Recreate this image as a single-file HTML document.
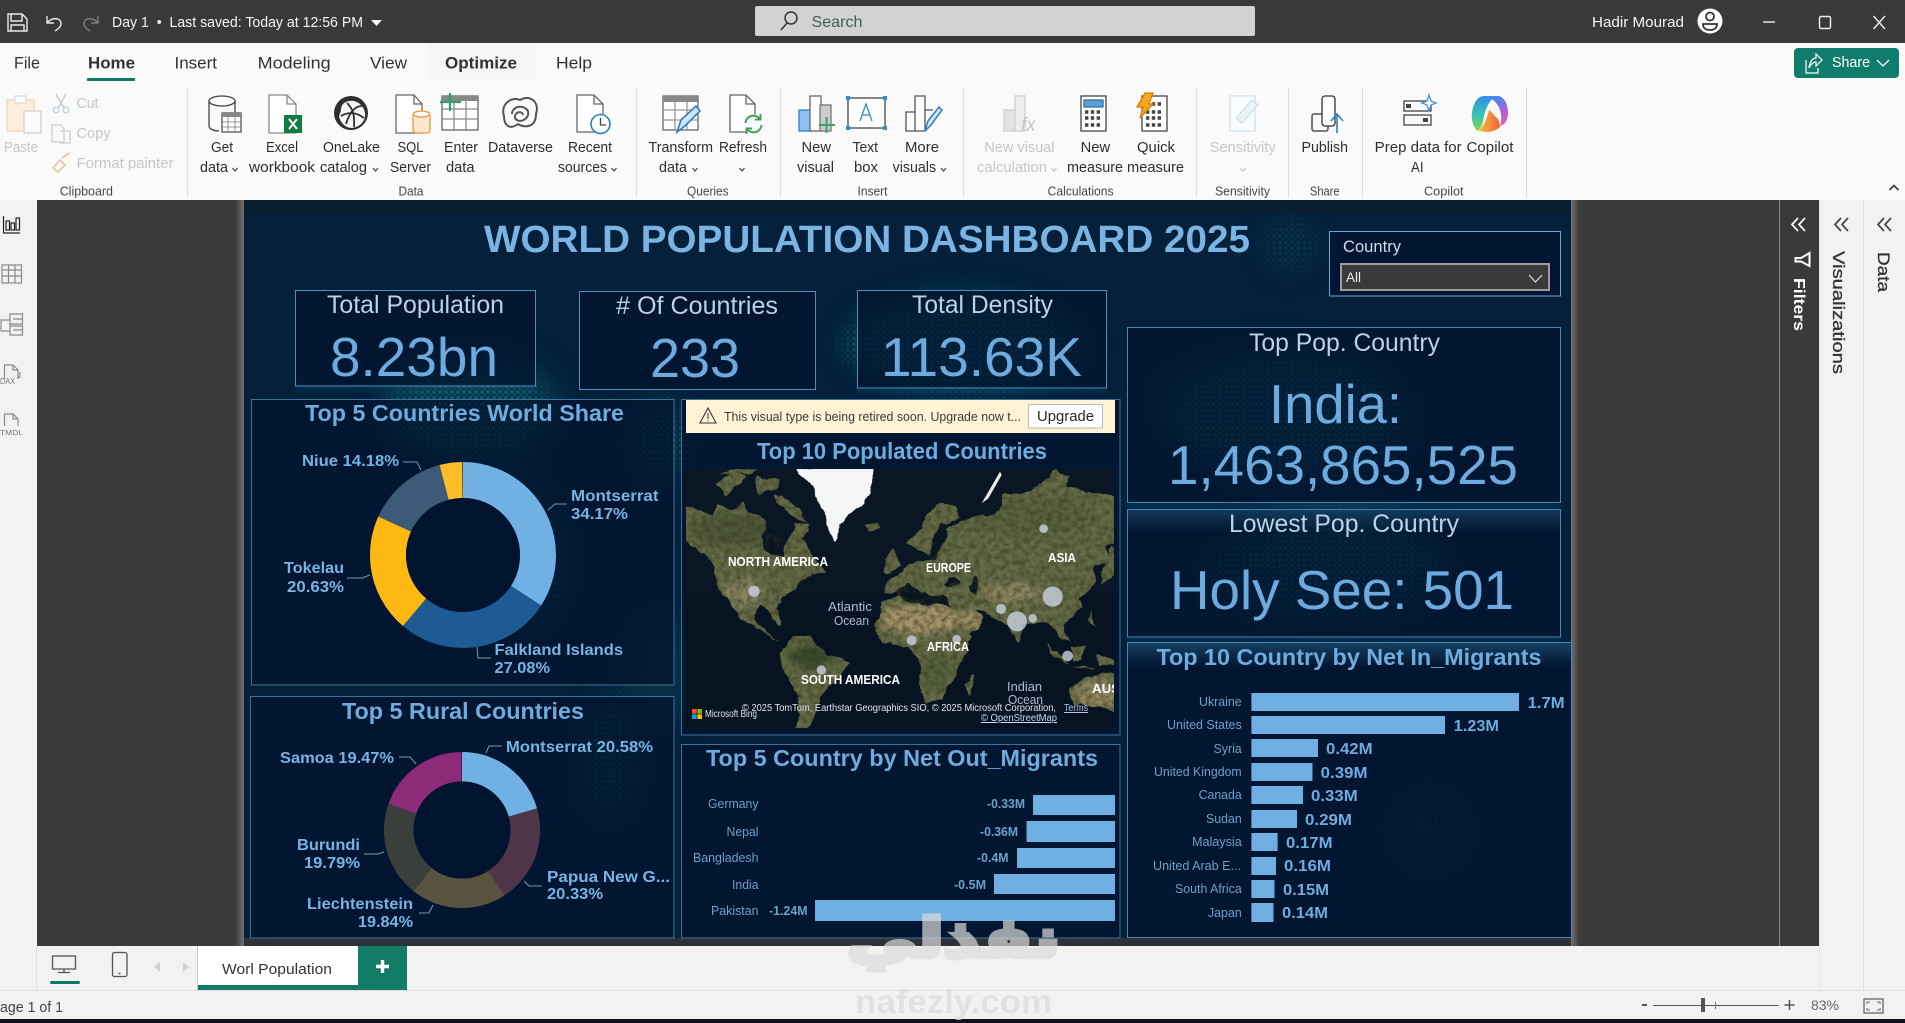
<!DOCTYPE html>
<html lang="en"><head><meta charset="utf-8"><title>Power BI - World Population Dashboard</title>
<style>
html,body{margin:0;padding:0;background:#3b3a39;overflow:hidden}
svg{display:block}
text{font-family:"Liberation Sans","DejaVu Sans",sans-serif;white-space:pre}
</style></head><body>
<svg xmlns="http://www.w3.org/2000/svg" width="1905" height="1023" viewBox="0 0 1905 1023">
<defs>
<pattern id="dots" width="6" height="6" patternUnits="userSpaceOnUse"><circle cx="2" cy="2" r="1.8" fill="#1f9a9c"/><circle cx="5" cy="5" r="1.4" fill="#157f88"/></pattern>
<filter id="b1" x="0" y="0" width="100%" height="100%"><feGaussianBlur stdDeviation=".8"/></filter>
<filter id="b2" x="-30%" y="-30%" width="160%" height="160%"><feGaussianBlur stdDeviation="2"/></filter>
<filter id="b12" x="-40%" y="-40%" width="180%" height="180%"><feGaussianBlur stdDeviation="14"/></filter>
<filter id="b6" x="-40%" y="-40%" width="180%" height="180%"><feGaussianBlur stdDeviation="12"/></filter>
<filter id="coast" x="-10%" y="-10%" width="120%" height="120%" color-interpolation-filters="sRGB">
<feTurbulence type="fractalNoise" baseFrequency=".02" numOctaves="4" seed="3" result="d"/>
<feDisplacementMap in="SourceGraphic" in2="d" scale="22" xChannelSelector="R" yChannelSelector="G"/></filter>
<filter id="grain" x="-5%" y="-5%" width="110%" height="110%" color-interpolation-filters="sRGB">
<feTurbulence type="fractalNoise" baseFrequency=".02" numOctaves="4" seed="3" result="d"/>
<feDisplacementMap in="SourceGraphic" in2="d" scale="30" xChannelSelector="R" yChannelSelector="G" result="land"/>
<feTurbulence type="fractalNoise" baseFrequency=".06" numOctaves="3" seed="5" result="n"/>
<feColorMatrix in="n" type="matrix" values="0 0 0 0 .2  0 0 0 0 .22  0 0 0 0 .12  1.300 0 0 0 -.45" result="dk"/>
<feComposite in="dk" in2="land" operator="in" result="c"/>
<feMerge><feMergeNode in="land"/><feMergeNode in="c"/></feMerge></filter>
<linearGradient id="sl" x1="0" x2="1"><stop offset="0" stop-color="#3b3a39"/><stop offset="1" stop-color="#747474"/></linearGradient>
<linearGradient id="sr" x1="0" x2="1"><stop offset="0" stop-color="#747474"/><stop offset="1" stop-color="#3b3a39"/></linearGradient>
<linearGradient id="band" x1="0" x2="0" y1="0" y2="1"><stop offset="0" stop-color="#2a6a94" stop-opacity=".7"/><stop offset="1" stop-color="#2a6a94" stop-opacity="0"/></linearGradient>
<linearGradient id="copL" x1="0" x2="0" y1="0" y2="1"><stop offset="0" stop-color="#2f8fe8"/><stop offset=".55" stop-color="#39c5b0"/><stop offset="1" stop-color="#8fd14f"/></linearGradient>
<linearGradient id="copR" x1="0" x2="0" y1="0" y2="1"><stop offset="0" stop-color="#3a8de8"/><stop offset=".5" stop-color="#b15fe0"/><stop offset="1" stop-color="#ef5fa7"/></linearGradient>
<linearGradient id="copB" x1="0" x2="1" y1="0" y2="0"><stop offset="0" stop-color="#f7c23c"/><stop offset="1" stop-color="#f0603c"/></linearGradient>
<clipPath id="mapclip"><rect x="686" y="469" width="428" height="259"/></clipPath>
<clipPath id="landclip"><path d="M-10 145L70 150 100 165 115 135 150 150 180 130 210 160 240 170 260 190 245 225 260 270 310 285 320 245 350 190 385 185 380 215 360 240 395 285 425 320 440 340 395 345 360 365 345 385 305 410 290 450 305 490 295 500 270 450 240 440 225 450 235 490 270 525 300 545 280 535 240 510 185 470 140 420 115 380 105 330 70 280 -10 235Z M615 395L625 355 660 345 690 310 745 300 790 260 800 205 860 180 920 170 960 150 975 105 1050 95 1130 35 1165 50 1160 80 1225 95 1330 115 1330 240 1275 260 1290 310 1250 320 1240 370 1195 420 1200 445 1150 490 1170 550 1140 530 1110 490 1060 490 1030 490 1015 550 985 490 940 470 900 450 880 450 920 480 890 510 850 530 810 440 800 425 740 425 720 395 690 370 650 400Z M585 490L610 430 650 410 720 430 810 440 840 510 880 530 850 590 835 650 805 680 775 730 740 735 725 670 715 600 695 560 650 555 610 550Z M300 590L340 530 390 535 440 580 505 605 480 650 435 690 410 745 385 815 345 815 360 720 335 665 305 625Z M1165 690L1220 650 1330 640 1330 770 1260 740 1180 730Z"/></clipPath>
<mask id="wm" maskUnits="userSpaceOnUse" x="244" y="200" width="1327" height="746">
<g filter="url(#b12)" fill="#fff">
<ellipse cx="470" cy="415" rx="85" ry="42"/><ellipse cx="520" cy="560" rx="50" ry="70"/><ellipse cx="610" cy="760" rx="28" ry="60"/><ellipse cx="965" cy="345" rx="120" ry="45"/><ellipse cx="1290" cy="420" rx="120" ry="65"/><ellipse cx="1330" cy="570" rx="120" ry="50"/><ellipse cx="1430" cy="830" rx="40" ry="40" fill="#888"/><ellipse cx="660" cy="440" rx="25" ry="40"/><ellipse cx="1290" cy="245" rx="26" ry="26" fill="#777"/>
</g></mask>
</defs>

<!-- base -->
<rect width="1905" height="1023" fill="#f3f2f1"/>
<rect x="37" y="200" width="1782" height="746" fill="#3b3a39"/>
<rect x="1779" y="200" width="1" height="746" fill="#8a8a8a"/>
<rect x="1863" y="200" width="1" height="790" fill="#e1dfdd"/>
<rect x="1819" y="200" width="1" height="790" fill="#e8e6e4"/>

<!-- title bar -->
<rect width="1905" height="43" fill="#3a3938"/>
<g fill="none" stroke="#e8e8e8" stroke-width="1.400">
<path d="M8 14H22L27 19V31H8ZM11 14V21H22V14M11 31V25H24V31"/>
<path d="M47 16V23H54M47 23C52 17 61 17 61 24C61 27 58 29 55 31"/>
<path d="M98 16V23H91M98 23C93 17 84 17 84 24C84 27 87 29 90 31" stroke="#7d7d7d"/>
</g>
<text x="112" y="27" font-size="14.500" fill="#f4f4f4" textLength="251" lengthAdjust="spacingAndGlyphs">Day 1  •  Last saved: Today at 12:56 PM</text>
<path d="M371 20H382L376.500 26Z" fill="#f4f4f4"/>
<rect x="755" y="6" width="500" height="30" rx="2" fill="#d2d2d2"/>
<g fill="none" stroke="#333" stroke-width="1.500"><circle cx="791" cy="18" r="6"/><path d="M787 23L781 30"/></g>
<text x="811.500" y="27" font-size="16" fill="#3f5f5a" textLength="51" lengthAdjust="spacingAndGlyphs">Search</text>
<text x="1592" y="27" font-size="14.500" fill="#f6f6f6" textLength="92" lengthAdjust="spacingAndGlyphs">Hadir Mourad</text>
<circle cx="1710" cy="21" r="12.500" fill="#fff"/>
<circle cx="1710" cy="16.500" r="4" fill="none" stroke="#333" stroke-width="1.800"/>
<path d="M1703 24H1717C1717 29 1713 30 1710 30C1707 30 1703 29 1703 24Z" fill="none" stroke="#333" stroke-width="1.800"/>
<g fill="none" stroke="#f0f0f0" stroke-width="1.400">
<path d="M1763 22H1775"/><rect x="1819.500" y="16.500" width="11" height="12" rx="1.500"/><path d="M1873.500 16L1885 29M1885 16L1873.500 29"/>
</g>

<!-- ribbon -->
<rect y="43" width="1905" height="157" fill="#fbfafa"/>
<rect x="428" y="43" width="108" height="37" fill="#f5f5f5"/>
<g font-size="17" fill="#323130" transform="translate(0 .5)">
<text x="14" y="68" textLength="26" lengthAdjust="spacingAndGlyphs">File</text>
<text x="88" y="68" textLength="47" lengthAdjust="spacingAndGlyphs" font-weight="bold">Home</text>
<text x="174.500" y="68" textLength="42.500" lengthAdjust="spacingAndGlyphs">Insert</text>
<text x="257.600" y="68" textLength="73" lengthAdjust="spacingAndGlyphs">Modeling</text>
<text x="370" y="68" textLength="37" lengthAdjust="spacingAndGlyphs">View</text>
<text x="445" y="68" textLength="72" lengthAdjust="spacingAndGlyphs" font-weight="bold">Optimize</text>
<text x="556" y="68" textLength="36" lengthAdjust="spacingAndGlyphs">Help</text>
</g>
<rect x="87" y="78" width="48" height="3" fill="#117865"/>
<rect x="1794" y="48" width="105" height="30" rx="4" fill="#107c6c"/>
<path d="M1806 60V73H1818V68M1809 68C1810 61 1813 58 1816 58V54L1822 60L1816 66V62C1813 62 1811 64 1809 68Z" fill="none" stroke="#fff" stroke-width="1.200"/>
<text x="1832" y="67" font-size="14.500" fill="#fff" textLength="38" lengthAdjust="spacingAndGlyphs">Share</text>
<path d="M1877 60L1883 66L1889 60" fill="none" stroke="#fff" stroke-width="1.300"/>
<g fill="#dcdcdc"><rect x="187" y="88" width="1" height="110"/><rect x="636" y="88" width="1" height="110"/><rect x="780" y="88" width="1" height="110"/><rect x="963" y="88" width="1" height="110"/><rect x="1196" y="88" width="1" height="110"/><rect x="1288" y="88" width="1" height="110"/><rect x="1362" y="88" width="1" height="110"/><rect x="1526" y="88" width="1" height="110"/></g>

<!-- ribbon labels gray -->
<g font-size="14.500" fill="#c6c6c6" transform="translate(0 1)">
<text x="4" y="151" textLength="34" lengthAdjust="spacingAndGlyphs">Paste</text>
<text x="76.500" y="107" textLength="22" lengthAdjust="spacingAndGlyphs">Cut</text>
<text x="76.500" y="137" textLength="34" lengthAdjust="spacingAndGlyphs">Copy</text>
<text x="76.500" y="167" textLength="97" lengthAdjust="spacingAndGlyphs">Format painter</text>
<text x="984.400" y="151" textLength="70" lengthAdjust="spacingAndGlyphs">New visual</text>
<text x="977" y="171" textLength="70" lengthAdjust="spacingAndGlyphs">calculation</text>
<text x="1209.700" y="151" textLength="66" lengthAdjust="spacingAndGlyphs">Sensitivity</text>
</g>
<g font-size="14.500" fill="#2f2e2d" transform="translate(0 1)">
<text x="211" y="151" textLength="22" lengthAdjust="spacingAndGlyphs">Get</text>
<text x="200" y="171" textLength="28" lengthAdjust="spacingAndGlyphs">data</text>
<text x="266" y="151" textLength="32" lengthAdjust="spacingAndGlyphs">Excel</text>
<text x="249" y="171" textLength="66" lengthAdjust="spacingAndGlyphs">workbook</text>
<text x="323" y="151" textLength="57" lengthAdjust="spacingAndGlyphs">OneLake</text>
<text x="320" y="171" textLength="47" lengthAdjust="spacingAndGlyphs">catalog</text>
<text x="397.500" y="151" textLength="26" lengthAdjust="spacingAndGlyphs">SQL</text>
<text x="390" y="171" textLength="41" lengthAdjust="spacingAndGlyphs">Server</text>
<text x="444" y="151" textLength="34" lengthAdjust="spacingAndGlyphs">Enter</text>
<text x="446" y="171" textLength="28.500" lengthAdjust="spacingAndGlyphs">data</text>
<text x="488" y="151" textLength="65" lengthAdjust="spacingAndGlyphs">Dataverse</text>
<text x="568" y="151" textLength="44" lengthAdjust="spacingAndGlyphs">Recent</text>
<text x="558" y="171" textLength="49" lengthAdjust="spacingAndGlyphs">sources</text>
<text x="648.500" y="151" textLength="64.500" lengthAdjust="spacingAndGlyphs">Transform</text>
<text x="659" y="171" textLength="28" lengthAdjust="spacingAndGlyphs">data</text>
<text x="719" y="151" textLength="48" lengthAdjust="spacingAndGlyphs">Refresh</text>
<text x="801.500" y="151" textLength="29.500" lengthAdjust="spacingAndGlyphs">New</text>
<text x="797" y="171" textLength="37" lengthAdjust="spacingAndGlyphs">visual</text>
<text x="852.500" y="151" textLength="25.500" lengthAdjust="spacingAndGlyphs">Text</text>
<text x="854" y="171" textLength="24" lengthAdjust="spacingAndGlyphs">box</text>
<text x="905" y="151" textLength="34" lengthAdjust="spacingAndGlyphs">More</text>
<text x="892.600" y="171" textLength="43.500" lengthAdjust="spacingAndGlyphs">visuals</text>
<text x="1080.600" y="151" textLength="29.500" lengthAdjust="spacingAndGlyphs">New</text>
<text x="1067" y="171" textLength="56" lengthAdjust="spacingAndGlyphs">measure</text>
<text x="1137" y="151" textLength="38" lengthAdjust="spacingAndGlyphs">Quick</text>
<text x="1127" y="171" textLength="57" lengthAdjust="spacingAndGlyphs">measure</text>
<text x="1301.500" y="151" textLength="46.500" lengthAdjust="spacingAndGlyphs">Publish</text>
<text x="1374.700" y="151" textLength="87" lengthAdjust="spacingAndGlyphs">Prep data for</text>
<text x="1411" y="171" textLength="12.500" lengthAdjust="spacingAndGlyphs">AI</text>
<text x="1466.500" y="151" textLength="47" lengthAdjust="spacingAndGlyphs">Copilot</text>
</g>
<g font-size="12.500" fill="#484644" transform="translate(0 .5)">
<text x="59.700" y="195" textLength="53.300" lengthAdjust="spacingAndGlyphs">Clipboard</text>
<text x="398.500" y="195" textLength="25" lengthAdjust="spacingAndGlyphs">Data</text>
<text x="687" y="195" textLength="41.600" lengthAdjust="spacingAndGlyphs">Queries</text>
<text x="857.500" y="195" textLength="30" lengthAdjust="spacingAndGlyphs">Insert</text>
<text x="1047.600" y="195" textLength="66" lengthAdjust="spacingAndGlyphs">Calculations</text>
<text x="1215" y="195" textLength="55" lengthAdjust="spacingAndGlyphs">Sensitivity</text>
<text x="1310" y="195" textLength="29.500" lengthAdjust="spacingAndGlyphs">Share</text>
<text x="1424" y="195" textLength="39.600" lengthAdjust="spacingAndGlyphs">Copilot</text>
</g>
<g fill="none" stroke="#444" stroke-width="1.200" transform="translate(0 1)">
<path d="M232.500 167L235 170L237.500 167M373 167L375.500 170L378 167M611.500 167L614 170L616.500 167M692.500 167L695 170L697.500 167M739.500 167L742 170L744.500 167M941 167L943.500 170L946 167"/>
<path d="M1051.500 167L1054 170L1056.500 167M1240 167L1242.700 170L1245.500 167" stroke="#c6c6c6"/>
</g>
<path d="M1889.500 190L1894 185.500L1898.500 190" fill="none" stroke="#333" stroke-width="1.600"/>

<!-- ribbon icons -->
<g fill="none" stroke-width="1.300">
<!-- paste -->
<rect x="7" y="100" width="27" height="31" fill="#fbeedd" stroke="#edd7ba"/><rect x="15" y="96" width="11" height="7" fill="#fbfafa" stroke="#ddd"/><rect x="24" y="111" width="17" height="22" fill="#fbfafa" stroke="#d2d2d2"/>
<path d="M56 94L64 108M66 94L58 108" stroke="#c7c7c7"/><circle cx="56" cy="110" r="2.800" stroke="#b9d4e8"/><circle cx="66" cy="110" r="2.800" stroke="#b9d4e8"/>
<path d="M52 125H61L64 129V142H52ZM60 131H70V143H60" stroke="#cfcfcf"/>
<path d="M53 168L60 160L65 165L58 172ZM62 158L69 153" stroke="#e6cdaa" stroke-width="2"/>
<!-- get data -->
<ellipse cx="222" cy="101" rx="13" ry="5" stroke="#444" fill="#fff"/><path d="M209 101V126C209 129 214 131 219 131" stroke="#444"/><path d="M235 101V112" stroke="#444"/>
<rect x="222" y="113" width="19" height="19" fill="#fff" stroke="#555"/><rect x="222" y="113" width="19" height="4" fill="#888"/><path d="M222 122H241M222 127H241M228 117V132M235 117V132" stroke="#777" stroke-width=".8"/>
<!-- excel -->
<path d="M269 95H287L296 104V133H269ZM287 95V104H296" stroke="#8a8a8a" fill="#fff"/><rect x="284" y="115" width="18" height="18" fill="#107c41"/>
<path d="M289 119L297 129M297 119L289 129" stroke="#fff" stroke-width="2"/>
<!-- onelake -->
<circle cx="351" cy="113" r="17" fill="#2f2f2f"/>
<path d="M343 104C351 97 363 102 365 113C366 121 360 127 352 128C345 128 340 122 339 116C342 110 340 108 343 104Z" fill="#f5f5f5"/>
<path d="M347 103C352 108 355 113 354 127M341 116C348 112 356 112 364 118M362 106C356 106 350 111 346 124" stroke="#2f2f2f" stroke-width="1.800"/>
<!-- sql -->
<path d="M396 95H414L422 104V133H396ZM414 95V104H422" stroke="#666" fill="#fff"/><rect x="413" y="113" width="17" height="20" rx="3" fill="#fbe7cf" stroke="#e79a3a"/><ellipse cx="421.500" cy="114" rx="8" ry="3" fill="#fff" stroke="#e79a3a"/>
<!-- enter data -->
<rect x="442" y="96" width="36" height="34" stroke="#666" fill="#fff"/><rect x="442" y="96" width="36" height="5" fill="#888"/><path d="M442 109H478M442 119H478M454 101V130M466 101V130" stroke="#888"/><path d="M450 93V111M440 102H461" stroke="#2f9e6e" stroke-width="2.200"/>
<!-- dataverse -->
<path d="M504 116C500 104 512 96 520 100C530 94 540 102 536 114C536 128 524 128 518 124C510 130 504 126 504 116Z" stroke="#555" stroke-width="2"/><path d="M512 114C512 106 524 104 528 111C530 120 518 124 515 118C514 112 522 110 523 115" stroke="#555" stroke-width="2"/>
<!-- recent -->
<path d="M577 95H594L603 104V132H577ZM594 95V104H603" stroke="#666" fill="#fff"/><circle cx="600.500" cy="124" r="9.500" stroke="#2f7fbe" fill="#fff" stroke-width="1.600"/><path d="M600.500 118V125H606" stroke="#444"/>
<!-- transform -->
<rect x="663" y="96" width="35" height="34" stroke="#666" fill="#fff"/><rect x="663" y="96" width="35" height="6" fill="#888"/><path d="M663 110H698M663 120H698M675 102V130M687 102V130" stroke="#999"/><path d="M677 132L681 120L696 106L700 111L685 126Z" fill="#cfe4f5" stroke="#2f7fbe" stroke-width="1.600"/>
<!-- refresh -->
<path d="M730 95H746L755 104V132H730ZM746 95V104H755" stroke="#666" fill="#fff"/><circle cx="753.500" cy="124" r="10" fill="#fbfafa"/><path d="M745.500 123A8 8 0 0 1 760 119M761.500 125A8 8 0 0 1 747 129M760.500 114V119.500H755M746.500 134V128.500H752" stroke="#3e9e5b" stroke-width="1.900"/>
<!-- new visual -->
<rect x="799" y="110" width="13" height="21" fill="#8cc0ee" stroke="#2f7fbe"/><rect x="810" y="96" width="11" height="35" stroke="#666" fill="#fff"/><rect x="820" y="105" width="11" height="26" fill="#ccc" stroke="#777"/><path d="M826.500 117V133M819 125H835" stroke="#3f9d6e" stroke-width="2"/>
<!-- text box -->
<rect x="848" y="98" width="37" height="30" stroke="#444" fill="#fff"/><g fill="#2f8fc6"><rect x="846" y="96" width="4" height="4"/><rect x="883" y="96" width="4" height="4"/><rect x="846" y="126" width="4" height="4"/><rect x="883" y="126" width="4" height="4"/></g><path d="M860 121L866 104L872 121M862 115H870" stroke="#2f8fc6"/>
<!-- more visuals -->
<path d="M906 112H915V131H906ZM915 96H925V131H915ZM925 110H933" stroke="#555" fill="#fff"/><path d="M925 131L928 121L939 107L942 110L931 125Z" fill="#d5e7f5" stroke="#2f7fbe" stroke-width="1.500"/>
<!-- visual calc -->
<rect x="1004" y="110" width="12" height="21" fill="#e3e3e3" stroke="#d0d0d0"/><rect x="1015" y="96" width="10" height="35" fill="#eee" stroke="#d0d0d0"/>
<text x="1021" y="131" font-family="Liberation Serif" font-style="italic" font-size="19" fill="#c6c6c6" stroke="none">fx</text>
<!-- new measure -->
<rect x="1081" y="96" width="25" height="35" stroke="#444" fill="#fff"/><rect x="1084" y="100" width="19" height="7" fill="#5a9fd6" stroke="#2f6f9f"/>
<path d="M1085 112H1102M1085 118H1102M1085 125H1102" stroke="#444" stroke-width="3.400" stroke-dasharray="3.400 2.400"/>
<!-- quick measure -->
<rect x="1142" y="96" width="25" height="35" stroke="#444" fill="#fff"/><path d="M1146 104H1163M1146 112H1163M1146 118H1163M1146 125H1163" stroke="#444" stroke-width="3.400" stroke-dasharray="3.400 2.400"/>
<path d="M1145 93H1153L1149 104H1153L1140 118L1143 107H1137Z" fill="#f3a81e" stroke="#d87e0c"/>
<!-- sensitivity -->
<path d="M1230 96H1255V131H1230Z" stroke="#cfe1ee" fill="#fafdff"/><path d="M1236 118L1252 100L1258 105L1242 123Z" stroke="#cfdfe9" fill="#eaf3f9"/>
<!-- publish -->
<rect x="1312" y="114" width="16" height="17" rx="2" stroke="#333"/><rect x="1322" y="96" width="13" height="30" rx="3" stroke="#333" fill="#fff"/><path d="M1337 133V114M1331 121L1337 114L1343 121" stroke="#2f7fbe" stroke-width="1.600"/>
<!-- prep data -->
<rect x="1404" y="101" width="27" height="10" stroke="#444"/><rect x="1406" y="104" width="5" height="4" fill="#444"/><rect x="1404" y="115" width="27" height="10" stroke="#444"/><rect x="1423" y="118" width="5" height="4" fill="#444"/><path d="M1429 95L1431 101L1436 103L1431 105L1429 111L1427 105L1422 103L1427 101Z" stroke="#3a96cf" fill="#fff"/>
</g>
<!-- copilot -->
<path d="M1484 96H1497C1489 100 1486 108 1484 116C1483 122 1482 128 1477 131C1473 126 1471 120 1472 113C1473 103 1478 96 1484 96Z" fill="url(#copL)"/>
<path d="M1485 96H1499C1505 98 1508 105 1508 113C1508 120 1505 125 1500 126C1503 118 1501 106 1493 100Z" fill="url(#copR)"/>
<path d="M1478 131C1484 126 1487 118 1489 110L1495 114C1499 120 1500 124 1500 127C1497 130 1492 132 1486 132Z" fill="url(#copB)"/>
<path d="M1489 109C1490 104 1491 102 1493 101C1497 106 1499 112 1498 119C1495 117 1492 113 1489 109Z" fill="#f6f6f6" opacity=".85"/>

<!-- left sidebar icons -->
<g fill="none" stroke="#8a8a8a" stroke-width="1.200">
<path d="M3.500 216V233H20" stroke="#222"/><rect x="6" y="221" width="3.500" height="9" stroke="#222"/><rect x="11" y="223" width="3.500" height="7" stroke="#222"/><rect x="16" y="218" width="3.500" height="12" stroke="#222"/>
<rect x="2" y="265" width="19.500" height="18"/><path d="M2 270H21.500M2 276H21.500M8.500 265V283M15 265V283"/>
<path d="M1 320H10V331H1ZM10 314H22.500V324H10ZM10 326H22.500V335H10ZM13 319H22M13 330H22"/>
<path d="M4.500 379V365H13L18 370V379M13 365V370H18M18 378C20 378 20 376 20 372"/>
<text x="0" y="384" font-size="8" fill="#777" stroke="none" textLength="15" lengthAdjust="spacingAndGlyphs">DAX</text>
<path d="M4.500 426V414H13L18 419V426M13 414V419H18"/>
<text x="0" y="435" font-size="7.500" fill="#777" stroke="none" textLength="23" lengthAdjust="spacingAndGlyphs">TMDL</text>
</g>

<!-- REPORT PAGE -->
<rect x="236" y="200" width="8" height="746" fill="url(#sl)"/>
<rect x="1571" y="200" width="8" height="746" fill="url(#sr)"/>
<rect x="244" y="200" width="1327" height="746" fill="#04203b"/>
<rect x="244" y="200" width="1327" height="14" fill="#0b1c2e" opacity=".7"/>
<rect x="244" y="938" width="1327" height="8" fill="#2c3238"/>
<!-- background world glow -->
<g filter="url(#b12)" fill="#0e5468" opacity=".28">
<ellipse cx="470" cy="400" rx="90" ry="55"/><ellipse cx="500" cy="510" rx="45" ry="90"/><ellipse cx="960" cy="340" rx="110" ry="50"/><ellipse cx="1270" cy="400" rx="120" ry="55"/><ellipse cx="1350" cy="540" rx="90" ry="40"/><ellipse cx="660" cy="670" rx="40" ry="60"/>
</g>
<g mask="url(#wm)"><rect x="244" y="200" width="1327" height="746" fill="url(#dots)" filter="url(#b1)" opacity=".6"/></g>

<!-- panels -->
<g fill="#01132e" fill-opacity=".74" stroke="#4a86b3" stroke-width="1">
<rect x="1329.500" y="231.500" width="231" height="64.500" stroke="#6aa6d1"/>
<rect x="295.500" y="290.500" width="240" height="95.500" stroke="#4e8fbe"/>
<rect x="579.500" y="291.500" width="236" height="98" stroke="#4e8fbe"/>
<rect x="857.500" y="290.500" width="249" height="97.500" stroke="#4e8fbe"/>
<rect x="1127.500" y="327.500" width="433" height="175"/>
<rect x="1127.500" y="509.500" width="433" height="127.500"/>
<rect x="1127.500" y="642.500" width="444" height="295"/>
<rect x="251.500" y="399.500" width="422.500" height="285.500" stroke="#3f7299"/>
<rect x="250.500" y="696.500" width="423.500" height="241.500" stroke="#3f7299"/>
<rect x="681.500" y="399.500" width="438.500" height="335.500" stroke="#3f7299"/>
<rect x="681.500" y="744.500" width="438.500" height="193.500" stroke="#3f7299"/>
</g>
<rect x="1128" y="510" width="432" height="22" fill="url(#band)" opacity=".6"/>
<rect x="1128" y="643" width="443" height="24" fill="url(#band)" opacity=".7"/>
<g opacity=".2" filter="url(#b2)" fill="#1d6a8d"><rect x="295" y="386" width="240" height="5"/><rect x="857" y="388" width="249" height="5"/><rect x="1127" y="502" width="433" height="7"/><rect x="1127" y="637" width="433" height="5"/></g>

<!-- title & KPI -->
<text x="484" y="252" font-size="38" font-weight="bold" fill="#7ab4e2" textLength="766" lengthAdjust="spacingAndGlyphs">WORLD POPULATION DASHBOARD 2025</text>
<g font-size="25" fill="#bcd2e6">
<text x="327" y="313" textLength="177" lengthAdjust="spacingAndGlyphs">Total Population</text>
<text x="616" y="314" textLength="162" lengthAdjust="spacingAndGlyphs"># Of Countries</text>
<text x="912" y="313" textLength="141" lengthAdjust="spacingAndGlyphs">Total Density</text>
<text x="1249" y="351" textLength="191" lengthAdjust="spacingAndGlyphs">Top Pop. Country</text>
<text x="1229" y="532" textLength="230" lengthAdjust="spacingAndGlyphs">Lowest Pop. Country</text>
</g>
<g font-size="55" fill="#6dabdf">
<text x="330" y="376" textLength="168" lengthAdjust="spacingAndGlyphs">8.23bn</text>
<text x="650" y="377" textLength="90" lengthAdjust="spacingAndGlyphs">233</text>
<text x="881" y="376" textLength="201" lengthAdjust="spacingAndGlyphs">113.63K</text>
<text x="1269" y="423" textLength="133" lengthAdjust="spacingAndGlyphs">India:</text>
<text x="1168" y="484" textLength="350" lengthAdjust="spacingAndGlyphs">1,463,865,525</text>
<text x="1170" y="609" textLength="344" lengthAdjust="spacingAndGlyphs">Holy See: 501</text>
</g>

<!-- slicer -->
<text x="1343" y="252" font-size="16.500" fill="#d0dbe6" textLength="58" lengthAdjust="spacingAndGlyphs">Country</text>
<rect x="1341" y="264" width="208" height="26" fill="#3a3a3a" stroke="#9c9c9c" stroke-width="2"/>
<text x="1346" y="282" font-size="13.500" fill="#eee" textLength="15" lengthAdjust="spacingAndGlyphs">All</text>
<path d="M1529 275L1535.500 282L1542 275" fill="none" stroke="#ddd" stroke-width="1.200"/>

<!-- panel titles -->
<g font-size="23" font-weight="bold" fill="#6fabdc">
<text x="305" y="421" textLength="319" lengthAdjust="spacingAndGlyphs">Top 5 Countries World Share</text>
<text x="342" y="719" textLength="242" lengthAdjust="spacingAndGlyphs">Top 5 Rural Countries</text>
<text x="757" y="459" textLength="290" lengthAdjust="spacingAndGlyphs">Top 10 Populated Countries</text>
<text x="706" y="766" textLength="392" lengthAdjust="spacingAndGlyphs">Top 5 Country by Net Out_Migrants</text>
<text x="1156.500" y="665" textLength="385" lengthAdjust="spacingAndGlyphs">Top 10 Country by Net In_Migrants</text>
</g>

<!-- donut 1 -->
<g fill="none" stroke-width="36" transform="rotate(-90 463 555)">
<circle cx="463" cy="555" r="75" pathLength="100" stroke="#71b0e3" stroke-dasharray="34.17 100"/>
<circle cx="463" cy="555" r="75" pathLength="100" stroke="#1e5a93" stroke-dasharray="27.08 100" stroke-dashoffset="-34.17"/>
<circle cx="463" cy="555" r="75" pathLength="100" stroke="#fdb813" stroke-dasharray="20.63 100" stroke-dashoffset="-61.25"/>
<circle cx="463" cy="555" r="75" pathLength="100" stroke="#3d5b78" stroke-dasharray="14.18 100" stroke-dashoffset="-81.88"/>
<circle cx="463" cy="555" r="75" pathLength="100" stroke="#fdbd27" stroke-dasharray="3.94 100" stroke-dashoffset="-96.06"/>
</g>
<circle cx="463" cy="555" r="57" fill="#01142f"/>
<!-- donut 2 -->
<g fill="none" stroke-width="29.500" transform="rotate(-90 462 830)">
<circle cx="462" cy="830" r="63.300" pathLength="100" stroke="#71b0e3" stroke-dasharray="20.58 100"/>
<circle cx="462" cy="830" r="63.300" pathLength="100" stroke="#4f3549" stroke-dasharray="20.33 100" stroke-dashoffset="-20.58"/>
<circle cx="462" cy="830" r="63.300" pathLength="100" stroke="#57533f" stroke-dasharray="19.84 100" stroke-dashoffset="-40.91"/>
<circle cx="462" cy="830" r="63.300" pathLength="100" stroke="#3b3f3c" stroke-dasharray="19.79 100" stroke-dashoffset="-60.75"/>
<circle cx="462" cy="830" r="63.300" pathLength="100" stroke="#8d2b78" stroke-dasharray="19.46 100" stroke-dashoffset="-80.54"/>
</g>
<circle cx="462" cy="830" r="48.500" fill="#01142f"/>
<!-- leaders -->
<g fill="none" stroke="#7d96ad" stroke-width="1">
<path d="M403 462H417L421 470M548 510L555 504H567M347 578H362L370 575M477 647L478 658H491"/>
<path d="M486 753L489 746H502M399 757H410L416 764M364 854H378L384 852M524 881L529 886H542M419 913H429L433 905"/>
</g>
<!-- donut labels -->
<g font-size="16" font-weight="bold" fill="#78b3e4">
<text x="302" y="466" textLength="97" lengthAdjust="spacingAndGlyphs">Niue 14.18%</text>
<text x="571" y="501" textLength="87.500" lengthAdjust="spacingAndGlyphs">Montserrat</text>
<text x="571" y="519" textLength="57" lengthAdjust="spacingAndGlyphs">34.17%</text>
<text x="284" y="573" textLength="60" lengthAdjust="spacingAndGlyphs">Tokelau</text>
<text x="287" y="592" textLength="57" lengthAdjust="spacingAndGlyphs">20.63%</text>
<text x="494.500" y="655" textLength="128.500" lengthAdjust="spacingAndGlyphs">Falkland Islands</text>
<text x="494.500" y="673" textLength="55.500" lengthAdjust="spacingAndGlyphs">27.08%</text>
<text x="506" y="752" textLength="147" lengthAdjust="spacingAndGlyphs">Montserrat 20.58%</text>
<text x="280" y="763" textLength="114" lengthAdjust="spacingAndGlyphs">Samoa 19.47%</text>
<text x="297" y="850" textLength="63" lengthAdjust="spacingAndGlyphs">Burundi</text>
<text x="304" y="868" textLength="56" lengthAdjust="spacingAndGlyphs">19.79%</text>
<text x="547" y="882" textLength="123" lengthAdjust="spacingAndGlyphs">Papua New G...</text>
<text x="547" y="899" textLength="56" lengthAdjust="spacingAndGlyphs">20.33%</text>
<text x="307" y="909" textLength="106" lengthAdjust="spacingAndGlyphs">Liechtenstein</text>
<text x="358" y="927" textLength="55" lengthAdjust="spacingAndGlyphs">19.84%</text>
</g>

<!-- warning bar -->
<rect x="686" y="400" width="429" height="33" fill="#fff3d6"/>
<rect x="1028.500" y="404.500" width="74" height="23.500" rx="1" fill="#fff" stroke="#b8b8b8"/>
<path d="M708 408L716 423H700Z" fill="none" stroke="#333" stroke-width="1.100"/><path d="M708 413V419M708 420.500V421.500" stroke="#333"/>
<text x="724" y="421" font-size="12.500" fill="#3a3a3a" textLength="297" lengthAdjust="spacingAndGlyphs">This visual type is being retired soon. Upgrade now t...</text>
<text x="1037" y="421" font-size="15" fill="#2a2a2a" textLength="57" lengthAdjust="spacingAndGlyphs">Upgrade</text>

<!-- map -->
<g clip-path="url(#mapclip)">
<rect x="686" y="469" width="428" height="259" fill="#071321"/>
<g transform="translate(680 460) scale(.33333)">
<rect x="0" y="0" width="1320" height="400" fill="#0b1826" opacity=".8"/>
<g filter="url(#grain)">
<path fill="#646b47" d="M-10 145L70 150 100 165 115 135 150 150 180 130 210 160 240 170 260 190 245 225 260 270 310 285 320 245 350 190 385 185 380 215 360 240 395 285 425 320 440 340 395 345 360 365 345 385 305 410 290 450 305 490 295 500 270 450 240 440 225 450 235 490 270 525 300 545 280 535 240 510 185 470 140 420 115 380 105 330 70 280 -10 235Z M110 75L150 35 200 50 180 80 130 110Z M225 50L300 60 290 80 240 100Z M280 100L340 130 380 180 340 170 290 130Z M115 35L170 27 230 27 200 45Z M685 250L720 200 770 135 830 135 840 175 790 195 760 235 745 280 710 265Z M615 395L625 355 660 345 690 310 745 300 790 260 800 205 860 180 920 170 960 150 975 105 1050 95 1130 35 1165 50 1160 80 1225 95 1330 115 1330 240 1275 260 1290 310 1250 320 1240 370 1195 420 1200 445 1150 490 1170 550 1140 530 1110 490 1060 490 1030 490 1015 550 985 490 940 470 900 450 880 450 920 480 890 510 850 530 810 440 800 425 740 425 720 395 690 370 650 400Z M585 490L610 430 650 410 720 430 810 440 840 510 880 530 850 590 835 650 805 680 775 730 740 735 725 670 715 600 695 560 650 555 610 550Z M300 590L340 530 390 535 440 580 505 605 480 650 435 690 410 745 385 815 345 815 360 720 335 665 305 625Z M855 670L880 640 880 680 862 700Z M1100 545L1165 610 1130 590Z M1170 560L1215 555 1205 600 1175 600Z M1170 615L1250 625 1200 625Z M1250 590L1330 605 1330 625 1260 615Z M1230 450L1250 500 1225 490Z M1270 330L1295 260 1330 330 1260 370Z M1165 690L1220 650 1330 640 1330 770 1260 740 1180 730Z M615 300L640 265 665 320 630 340 612 335Z M555 190L595 185 600 205 570 215Z"/>
<g clip-path="url(#landclip)"><g filter="url(#b6)">
<ellipse cx="720" cy="478" rx="125" ry="48" fill="#a8946a"/>
<ellipse cx="875" cy="480" rx="40" ry="28" fill="#a39168"/>
<ellipse cx="1000" cy="400" rx="95" ry="32" fill="#8e8860"/>
<ellipse cx="395" cy="590" rx="65" ry="35" fill="#374a2b"/>
<ellipse cx="160" cy="210" rx="130" ry="50" fill="#505838"/>
<ellipse cx="1060" cy="170" rx="180" ry="60" fill="#5a6340"/>
<ellipse cx="190" cy="400" rx="60" ry="45" fill="#8a8464"/>
<ellipse cx="1250" cy="700" rx="70" ry="40" fill="#978a60"/>
<ellipse cx="770" cy="630" rx="40" ry="60" fill="#55623e"/>
</g></g>
<g fill="#071321">
<path d="M640 400L690 370 725 400 800 415 805 435 720 432 650 410Z"/><ellipse cx="815" cy="368" rx="30" ry="10"/><ellipse cx="885" cy="375" rx="10" ry="28"/><ellipse cx="275" cy="250" rx="28" ry="30"/><path d="M740 300L760 235 775 250 770 300Z"/>
</g>
</g>
<g filter="url(#coast)"><path fill="#f4f6f6" d="M345 20H580L570 100 530 150 480 190 465 245 445 220 430 150 400 90Z"/></g>
<path fill="#e9ecec" d="M905 130L960 35 965 45 925 115Z"/>
<g fill="#c7d0dc" opacity=".82">
<circle cx="222" cy="394" r="17"/><circle cx="424" cy="630" r="14"/><circle cx="695" cy="541" r="15"/><circle cx="830" cy="538" r="13"/><circle cx="963" cy="447" r="15"/><circle cx="1011" cy="484" r="30"/><circle cx="1058" cy="475" r="13"/><circle cx="1118" cy="410" r="30"/><circle cx="1091" cy="206" r="13"/><circle cx="1163" cy="588" r="16"/>
</g>
</g>
<g font-size="13" font-weight="bold" fill="#fff">
<text x="728" y="566" textLength="100" lengthAdjust="spacingAndGlyphs">NORTH AMERICA</text>
<text x="926" y="572" textLength="45" lengthAdjust="spacingAndGlyphs">EUROPE</text>
<text x="1048" y="562" textLength="28" lengthAdjust="spacingAndGlyphs">ASIA</text>
<text x="927" y="651" textLength="42" lengthAdjust="spacingAndGlyphs">AFRICA</text>
<text x="801" y="684" textLength="99" lengthAdjust="spacingAndGlyphs">SOUTH AMERICA</text>
<text x="1092" y="693" textLength="28" lengthAdjust="spacingAndGlyphs">AUS</text>
</g>
<g font-size="13" fill="#a9bdd4">
<text x="828" y="611" textLength="44" lengthAdjust="spacingAndGlyphs">Atlantic</text>
<text x="834" y="625" textLength="35" lengthAdjust="spacingAndGlyphs">Ocean</text>
<text x="1007" y="691" textLength="35" lengthAdjust="spacingAndGlyphs">Indian</text>
<text x="1008" y="704" textLength="35" lengthAdjust="spacingAndGlyphs">Ocean</text>
</g>
<g font-size="10" fill="#dfe6ee">
<text x="742" y="711" textLength="314" lengthAdjust="spacingAndGlyphs">© 2025 TomTom, Earthstar Geographics SIO, © 2025 Microsoft Corporation,</text>
<text x="1064" y="711" textLength="24" lengthAdjust="spacingAndGlyphs" text-decoration="underline" fill="#a8c8ee">Terms</text>
<text x="981" y="721" textLength="76" lengthAdjust="spacingAndGlyphs" text-decoration="underline" fill="#c8dcf2">© OpenStreetMap</text>
<text x="705" y="717" textLength="52" lengthAdjust="spacingAndGlyphs">Microsoft Bing</text>
</g>
<rect x="692" y="709" width="4.700" height="4.700" fill="#f25022"/><rect x="697.300" y="709" width="4.700" height="4.700" fill="#7fba00"/><rect x="692" y="714.300" width="4.700" height="4.700" fill="#00a4ef"/><rect x="697.300" y="714.300" width="4.700" height="4.700" fill="#ffb900"/>
</g>

<!-- net out bars -->
<g fill="#6fafe2">
<rect x="1033" y="795" width="82" height="20"/><rect x="1026.500" y="821" width="88.500" height="21"/><rect x="1017" y="848" width="98" height="20"/><rect x="994" y="874" width="121" height="20"/><rect x="815" y="900" width="300" height="21"/>
</g>
<g font-size="12.500" fill="#6ba0c9">
<text x="708" y="808" textLength="50.500" lengthAdjust="spacingAndGlyphs">Germany</text>
<text x="726.500" y="836" textLength="32" lengthAdjust="spacingAndGlyphs">Nepal</text>
<text x="693" y="862" textLength="65.500" lengthAdjust="spacingAndGlyphs">Bangladesh</text>
<text x="732" y="889" textLength="26.500" lengthAdjust="spacingAndGlyphs">India</text>
<text x="711" y="915" textLength="47.500" lengthAdjust="spacingAndGlyphs">Pakistan</text>
<text x="1199" y="706" textLength="42.700" lengthAdjust="spacingAndGlyphs">Ukraine</text>
<text x="1167" y="729" textLength="74.700" lengthAdjust="spacingAndGlyphs">United States</text>
<text x="1213.500" y="753" textLength="28.200" lengthAdjust="spacingAndGlyphs">Syria</text>
<text x="1154" y="776" textLength="87.700" lengthAdjust="spacingAndGlyphs">United Kingdom</text>
<text x="1198.600" y="799" textLength="43.100" lengthAdjust="spacingAndGlyphs">Canada</text>
<text x="1206" y="823" textLength="35.700" lengthAdjust="spacingAndGlyphs">Sudan</text>
<text x="1192" y="846" textLength="49.700" lengthAdjust="spacingAndGlyphs">Malaysia</text>
<text x="1153" y="870" textLength="88" lengthAdjust="spacingAndGlyphs">United Arab E...</text>
<text x="1175" y="893" textLength="66.700" lengthAdjust="spacingAndGlyphs">South Africa</text>
<text x="1208" y="917" textLength="33.700" lengthAdjust="spacingAndGlyphs">Japan</text>
</g>
<g font-size="12.500" font-weight="bold" fill="#6ba0c9">
<text x="987" y="808" textLength="38" lengthAdjust="spacingAndGlyphs">-0.33M</text>
<text x="980" y="836" textLength="38" lengthAdjust="spacingAndGlyphs">-0.36M</text>
<text x="977" y="862" textLength="31.500" lengthAdjust="spacingAndGlyphs">-0.4M</text>
<text x="954" y="889" textLength="32" lengthAdjust="spacingAndGlyphs">-0.5M</text>
<text x="769" y="915" textLength="38.500" lengthAdjust="spacingAndGlyphs">-1.24M</text>
</g>
<!-- net in bars -->
<g fill="#6fafe2">
<rect x="1251.400" y="693" width="267.600" height="18"/><rect x="1251.400" y="716" width="193.600" height="18"/><rect x="1251.400" y="739" width="66.600" height="18"/><rect x="1251.400" y="763" width="61.100" height="18"/><rect x="1251.400" y="786" width="51.600" height="18"/><rect x="1251.400" y="810" width="45.600" height="18"/><rect x="1251.400" y="833" width="26.200" height="18"/><rect x="1251.400" y="857" width="24.600" height="18"/><rect x="1251.400" y="880" width="23.100" height="18"/><rect x="1251.400" y="903" width="22.100" height="19"/>
</g>
<g font-size="16" font-weight="bold" fill="#6fabdc">
<text x="1527.600" y="708" textLength="37" lengthAdjust="spacingAndGlyphs">1.7M</text>
<text x="1453.700" y="731" textLength="45.300" lengthAdjust="spacingAndGlyphs">1.23M</text>
<text x="1326" y="754" textLength="46.600" lengthAdjust="spacingAndGlyphs">0.42M</text>
<text x="1320.700" y="778" textLength="46.800" lengthAdjust="spacingAndGlyphs">0.39M</text>
<text x="1311" y="801" textLength="46.700" lengthAdjust="spacingAndGlyphs">0.33M</text>
<text x="1305" y="825" textLength="47" lengthAdjust="spacingAndGlyphs">0.29M</text>
<text x="1286" y="848" textLength="46.500" lengthAdjust="spacingAndGlyphs">0.17M</text>
<text x="1284" y="871" textLength="47" lengthAdjust="spacingAndGlyphs">0.16M</text>
<text x="1283" y="895" textLength="46" lengthAdjust="spacingAndGlyphs">0.15M</text>
<text x="1282" y="918" textLength="46" lengthAdjust="spacingAndGlyphs">0.14M</text>
</g>

<!-- right panes -->
<g fill="none" stroke-width="1.700">
<path d="M1798 218L1792 224.500L1798 231M1805 218L1799 224.500L1805 231" stroke="#fff"/>
<path d="M1841 218L1835 224.500L1841 231M1848 218L1842 224.500L1848 231" stroke="#444"/>
<path d="M1884 218L1878 224.500L1884 231M1891 218L1885 224.500L1891 231" stroke="#444"/>
<path d="M1809.500 253V266L1801 261.500H1795.500V258H1801Z" stroke="#fff" stroke-width="2"/>
</g>
<text transform="translate(1794 278) rotate(90)" font-size="16" font-weight="bold" fill="#fff" textLength="53" lengthAdjust="spacingAndGlyphs">Filters</text>
<text transform="translate(1833 251) rotate(90)" font-size="17" fill="#333" stroke="#333" stroke-width=".3" textLength="123" lengthAdjust="spacingAndGlyphs">Visualizations</text>
<text transform="translate(1878 252) rotate(90)" font-size="17" fill="#333" stroke="#333" stroke-width=".3" textLength="40" lengthAdjust="spacingAndGlyphs">Data</text>

<!-- tab bar -->
<rect x="0" y="946" width="1819" height="44" fill="#f3f2f1"/>
<rect x="36" y="946" width="1" height="44" fill="#e1dfdd"/>
<rect x="0" y="990" width="1905" height="1" fill="#e1dfdd"/>
<rect x="1819" y="946" width="1" height="44" fill="#e8e6e4"/>
<g fill="none" stroke="#555" stroke-width="1.300">
<rect x="52.500" y="956" width="23" height="13"/><path d="M64 969V972M58 972.500H70"/>
<rect x="112.500" y="952.500" width="14.500" height="24" rx="2"/><path d="M118.500 973.500H120.500" stroke-width="1.500"/>
</g>
<rect x="50" y="981" width="30" height="3" rx="1.500" fill="#117865"/>
<path d="M160 962L154 967L160 972ZM183 962L189 967L183 972Z" fill="#d0d0d0"/>
<rect x="197" y="946" width="161" height="44" fill="#fff"/>
<rect x="197" y="985" width="161" height="5" fill="#117865"/>
<rect x="197" y="946" width="1" height="44" fill="#c8c8c8"/>
<text x="222" y="974" font-size="14.500" fill="#333" textLength="110" lengthAdjust="spacingAndGlyphs">Worl Population</text>
<rect x="358" y="946" width="49" height="44" fill="#137c66"/>
<path d="M382.500 960V973M376 966.500H389" stroke="#fff" stroke-width="3.400"/>

<!-- status bar -->
<text x="0" y="1012" font-size="14.500" fill="#444" textLength="63" lengthAdjust="spacingAndGlyphs">age 1 of 1</text>
<rect y="1019" width="1905" height="4" fill="#0e1216"/>
<rect x="1642" y="1004" width="5" height="2" fill="#555"/>
<rect x="1653" y="1005" width="125.600" height="1" fill="#555"/>
<rect x="1701" y="998" width="4" height="14" fill="#555"/>
<rect x="1715" y="1002" width="1" height="7" fill="#777"/>
<path d="M1789.500 1000V1010M1784.500 1005H1794.500" stroke="#555" stroke-width="1.500"/>
<text x="1811" y="1010" font-size="14" fill="#666" textLength="28" lengthAdjust="spacingAndGlyphs">83%</text>
<rect x="1864" y="999" width="19" height="14" fill="none" stroke="#666" stroke-width="1.300"/>
<path d="M1867 1004V1002H1870M1877 1002H1880V1004M1880 1008V1010H1877M1870 1010H1867V1008" fill="none" stroke="#666"/>

<!-- watermark -->
<text x="847" y="957" font-size="54" font-weight="bold" fill="#dcdcdc" stroke="#dcdcdc" stroke-width="5" opacity=".7" textLength="213" lengthAdjust="spacingAndGlyphs" style='font-family:"DejaVu Sans",sans-serif' direction="rtl" text-anchor="start" transform="translate(213 0)">نفذلي</text>
<text x="855" y="1013" font-size="33" font-weight="bold" fill="#dedede" opacity=".8" textLength="197" lengthAdjust="spacingAndGlyphs">nafezly.com</text>
</svg>
</body></html>
